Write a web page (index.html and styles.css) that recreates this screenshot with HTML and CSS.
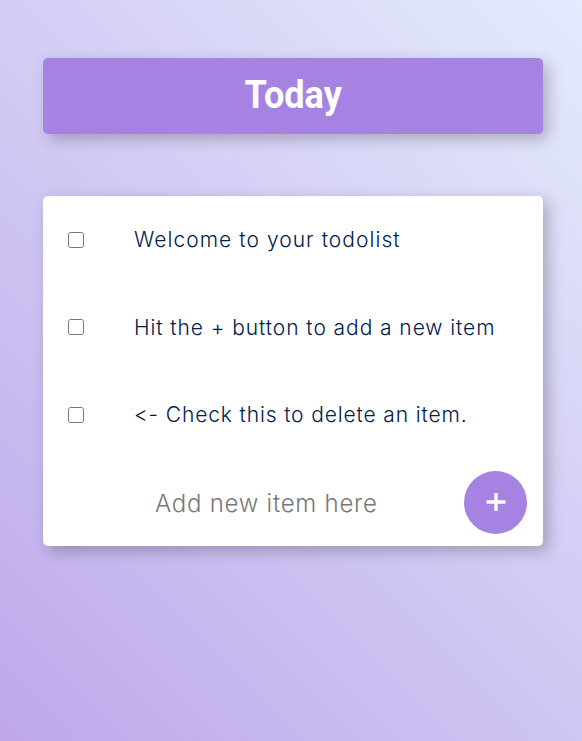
FILE: index.html
```html
<!DOCTYPE html>
<html lang="en">
<head>
<meta charset="utf-8">
<title>Todo List</title>
<link rel="stylesheet" href="styles.css">
</head>
<body>
<header class="heading box"><h1>Today</h1></header>
<main class="box list">
<label class="item"><input type="checkbox"><span class="welcome">Welcome to your todolist</span></label>
<label class="item"><input type="checkbox"><span class="hit">Hit the + button to add a new item</span></label>
<label class="item"><input type="checkbox"><span class="check">&lt;- Check this to delete an item.</span></label>
<form class="add">
<span class="hint">Add new item here</span>
<button type="button" aria-label="Add"><svg width="20" height="20" viewBox="0 0 20 20"><path d="M10 1v18M.5 10h19" stroke="#fff" stroke-width="3.4"/></svg></button>
</form>
</main>
</body>
</html>
```

FILE: styles.css
```css
* { box-sizing: border-box; }
html { height: 100%; }
body {
  margin: 0;
  min-height: 741px;
  padding: 58px 39px 0 43px;
  background: linear-gradient(45deg, #bea8ea 0%, #e4ebfd 100%);
  font-family: Inter, "Liberation Sans", sans-serif;
}
.box {
  border-radius: 5px;
  box-shadow: 5px 5px 15px rgba(0, 0, 0, 0.24);
}
.heading {
  height: 76px;
  background: #a683e3;
  color: #fff;
  display: flex;
  justify-content: center;
}
h1 {
  margin: 0;
  font-family: Roboto, sans-serif;
  font-size: 38px;
  line-height: 74px;
  font-weight: 700;
  transform: scaleX(0.95);
}
.list { margin-top: 62px; height: 350px; background: #fff; }
.item {
  height: 87.5px;
  display: flex;
  align-items: center;
  color: #00204a;
  font-size: 21px;
  font-weight: 300;
  white-space: nowrap;
}
.item input { margin: 0 50px 0 25px; width: 16px; height: 16px; }
.welcome { letter-spacing: 1.05px; }
.hit { letter-spacing: 0.93px; }
.check { letter-spacing: 0.87px; }
.add {
  display: flex;
  align-items: center;
  height: 87.5px;
  padding: 0 16px 0 112px;
  color: #777;
  font-size: 24px;
  font-weight: 350;
}
.hint { letter-spacing: 0.75px; padding-top: 2px; white-space: nowrap; }
.add button {
  margin-left: auto;
  width: 63px;
  height: 63px;
  border: 0;
  border-radius: 50%;
  padding: 0;
  background: #a683e3;
  display: grid;
  place-items: center;
}
```
